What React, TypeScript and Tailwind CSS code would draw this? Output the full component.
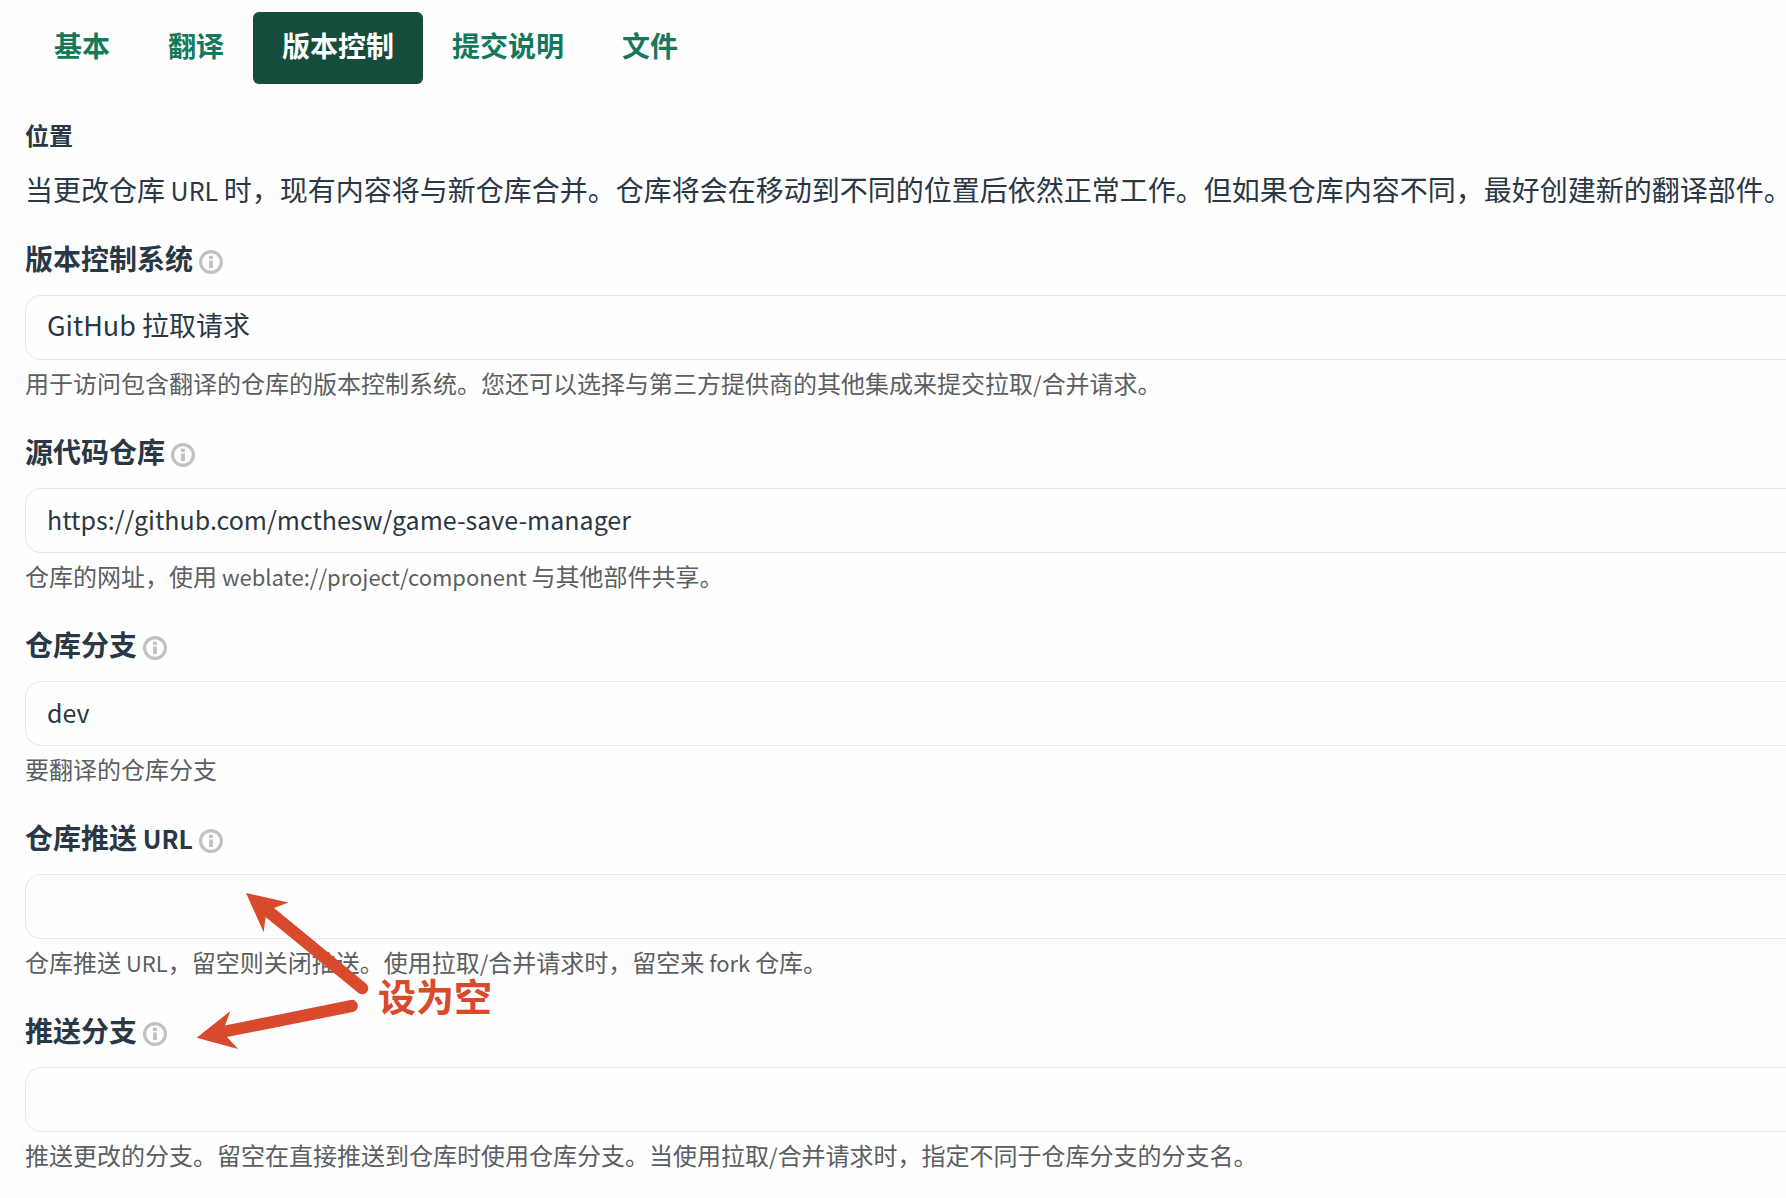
import React from "react";

const FONT = "font-['Noto_Sans_CJK_SC',sans-serif]";

const tabs = ["基本", "翻译", "版本控制", "提交说明", "文件"];

type Field = {
  id: string;
  label: string;
  value: string;
  help: string;
  select?: boolean;
};

const fields: Field[] = [
  {
    id: "vcs",
    label: "版本控制系统",
    value: "GitHub 拉取请求",
    help: "用于访问包含翻译的仓库的版本控制系统。您还可以选择与第三方提供商的其他集成来提交拉取/合并请求。",
    select: true,
  },
  {
    id: "repo",
    label: "源代码仓库",
    value: "https://github.com/mcthesw/game-save-manager",
    help: "仓库的网址，使用 weblate://project/component 与其他部件共享。",
  },
  { id: "branch", label: "仓库分支", value: "dev", help: "要翻译的仓库分支" },
  {
    id: "push",
    label: "仓库推送 URL",
    value: "",
    help: "仓库推送 URL，留空则关闭推送。使用拉取/合并请求时，留空来 fork 仓库。",
  },
  {
    id: "push-branch",
    label: "推送分支",
    value: "",
    help: "推送更改的分支。留空在直接推送到仓库时使用仓库分支。当使用拉取/合并请求时，指定不同于仓库分支的分支名。",
  },
];

// Latin runs are set slightly smaller than the surrounding Chinese text.
function Mixed({ text, latin }: { text: string; latin: string }) {
  return (
    <>
      {text.split(/( ?[\x21-\x7e]+ ?)/).map((part, i) =>
        i % 2 === 1 ? (
          <span key={i} className={latin}>
            {part}
          </span>
        ) : (
          part
        ),
      )}
    </>
  );
}

function InfoIcon() {
  return (
    <svg viewBox="0 0 24 24" className="size-6" aria-hidden="true">
      <circle cx="12" cy="12" r="10.4" fill="none" stroke="#c0c1c1" strokeWidth="3.2" />
      <path d="M10.1 5.8h3.8v3.2h-3.8zM10.1 10.4h3.8V18h-3.8z" fill="#c0c1c1" />
    </svg>
  );
}

function FormField({ field }: { field: Field }) {
  const box =
    "block h-[65px] w-full appearance-none rounded-l-2xl border border-r-0 border-[#e7e8e8] bg-[#fefefe] px-[21px] pb-1 text-[#2a3744] outline-none";
  return (
    <div>
      <div className="flex h-10 items-start gap-1.5">
        <label htmlFor={field.id} className="text-[28px] leading-[38px] font-bold">
          <Mixed text={field.label} latin="text-[25px]" />
        </label>
        <a href="#docs" aria-label="文档" className="mt-[11px]">
          <InfoIcon />
        </a>
      </div>
      <div className="mt-4">
        {field.select ? (
          <select id={field.id} className={`${box} text-[27px]`}>
            <option>{field.value}</option>
          </select>
        ) : (
          <input id={field.id} type="text" defaultValue={field.value} className={`${box} text-[25px]`} />
        )}
      </div>
      <p className="mt-[5px] text-[24px] leading-9 whitespace-nowrap text-[#5b5f62]">
        <Mixed text={field.help} latin="text-[22px]" />
      </p>
    </div>
  );
}

function Annotation() {
  return (
    <div className="pointer-events-none absolute top-[892px] left-[196px] flex">
      <svg width="174" height="160" viewBox="196 892 174 160" fill="#d9492c" aria-hidden="true">
        <path d="M246 893L288.5 902.5L274 908L366 983.5A6 6 0 0 1 358.5 993L265.6 917L263.7 932.3Z" />
        <path d="M196.7 1037.7L230.4 1011L225 1025.5L350.5 1000A6 6 0 0 1 353 1012L227 1037L238 1049Z" />
      </svg>
      <span className="mt-[78px] ml-2 text-[38px] leading-[50px] font-bold text-[#d9492c]">设为空</span>
    </div>
  );
}

export default function App() {
  return (
    <div className={`${FONT} relative min-h-screen overflow-hidden bg-[#fefefe] pl-[25px] text-[#2a3744]`}>
      <nav className="flex pt-3" role="tablist">
        {tabs.map((t) => (
          <button
            key={t}
            type="button"
            role="tab"
            aria-selected={t === "版本控制"}
            className={
              t === "版本控制"
                ? "h-[72px] rounded-md bg-[#154c3c] px-[29px] pb-1.5 text-[28px] leading-10 font-bold text-white"
                : "h-[72px] rounded-md px-[29px] pb-1.5 text-[28px] leading-10 font-bold text-[#14795c]"
            }
          >
            {t}
          </button>
        ))}
      </nav>
      <main>
        <h2 className="mt-[33px] text-[24px] leading-9 font-bold">位置</h2>
        <p className="mt-4 text-[28px] leading-10 whitespace-nowrap">
          <Mixed
            text="当更改仓库 URL 时，现有内容将与新仓库合并。仓库将会在移动到不同的位置后依然正常工作。但如果仓库内容不同，最好创建新的翻译部件。"
            latin="text-[25px]"
          />
        </p>
        <form className="mt-[29px] flex flex-col gap-[31px]">
          {fields.map((f) => (
            <FormField key={f.id} field={f} />
          ))}
        </form>
      </main>
      <Annotation />
    </div>
  );
}
